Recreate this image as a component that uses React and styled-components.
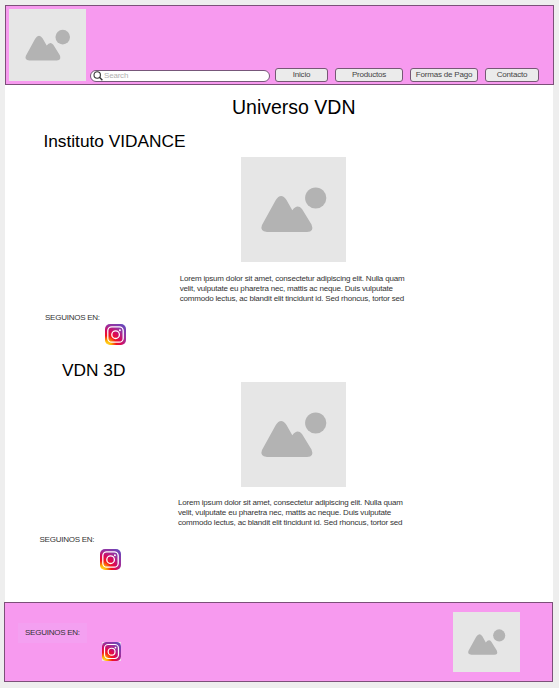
import React from "react";
import styled, { createGlobalStyle } from "styled-components";

const GlobalStyle = createGlobalStyle`
  * { box-sizing: border-box; }
  body {
    margin: 0;
    background: #eeeeee;
    font-family: "Liberation Sans", Arial, sans-serif;
    overflow: hidden;
  }
`;

const Page = styled.div`
  width: 559px;
  height: 688px;
  padding: 5px 5px 5px 4px;
  display: flex;
  flex-direction: column;
`;

const Header = styled.header`
  height: 80px;
  flex: none;
  margin-left: 1px;
  display: flex;
  align-items: flex-start;
  background: #f79aef;
  border: 1px solid #7c5079;
  padding: 3px;
`;

const Picture = styled.svg`
  display: block;
  flex: none;
  width: ${(p) => p.$w}px;
  height: ${(p) => p.$h}px;
  background: #e6e6e6;
  fill: #b3b3b3;
`;

const SearchBox = styled.label`
  width: 180px;
  height: 12px;
  margin: 61px 0 0 4px;
  padding-left: 2px;
  display: flex;
  align-items: center;
  gap: 1px;
  background: #fff;
  border: 1px solid #77577a;
  border-radius: 6px;
  flex: none;
`;

const Placeholder = styled.span`
  font-size: 8px;
  line-height: 10px;
  letter-spacing: -0.2px;
  color: #b0b0b0;
`;

const Nav = styled.nav`
  display: flex;
  gap: 7px;
  margin: 59px 0 0 5px;
`;

const NavButton = styled.button`
  width: ${(p) => p.$w}px;
  height: 14px;
  padding: 0 0 1px;
  border: 1px solid #775775;
  border-radius: 3px;
  background: #ebebeb;
  color: #444;
  font: 8px/10px "Liberation Sans", Arial, sans-serif;
  letter-spacing: -0.2px;
  white-space: nowrap;
`;

const Main = styled.main`
  width: 548px;
  height: 517px;
  flex: none;
  margin-left: 1px;
  background: #fff;
  display: flex;
  flex-direction: column;
`;

const Title = styled.h1`
  margin: 11px 0 13px 227px;
  font-size: 19.5px;
  line-height: 22px;
  font-weight: 400;
  color: #000;
  white-space: nowrap;
`;

const Section = styled.section`
  display: flex;
  flex-direction: column;
  align-items: flex-start;
  height: ${(p) => p.$h}px;
`;

const Heading = styled.h2`
  margin: 0 0 ${(p) => p.$bottom}px ${(p) => p.$left}px;
  font-size: 17.3px;
  line-height: 20px;
  font-weight: 400;
  color: #000;
  white-space: nowrap;
`;

const Figure = styled.div`
  margin-left: 236px;
`;

const Copy = styled.p`
  margin: ${(p) => p.$top}px 0 0 ${(p) => p.$left}px;
  font-size: 8px;
  line-height: 10px;
  letter-spacing: -0.19px;
  color: #333;
  white-space: pre;
`;

const Follow = styled.div`
  display: flex;
  flex-direction: column;
  align-items: flex-start;
  margin: ${(p) => p.$top}px 0 0 ${(p) => p.$left}px;
`;

const FollowLabel = styled.span`
  font-size: 8px;
  line-height: 10px;
  letter-spacing: -0.25px;
  color: #333;
  white-space: nowrap;
`;

const Logo = styled.svg`
  display: block;
  width: ${(p) => p.$size}px;
  height: ${(p) => p.$size}px;
  margin: ${(p) => p.$top}px 0 0 ${(p) => p.$left}px;
  background: ${(p) => p.$backing};
`;

const Footer = styled.footer`
  width: 549px;
  height: 80px;
  flex: none;
  display: flex;
  justify-content: space-between;
  align-items: flex-start;
  background: #f79aef;
  border: 1px solid #7c5079;
  padding: 9px 32px 0 13px;
`;

const FooterFollow = styled.div`
  display: flex;
  flex-direction: column;
  margin-top: 11px;
`;

const FooterLabel = styled(FollowLabel)`
  width: 69px;
  height: 20px;
  padding-left: 7px;
  background: #f4a0f1;
  line-height: 20px;
`;

function ImagePlaceholder({ w, h }) {
  return (
    <Picture $w={w} $h={h} viewBox="0 0 105 105">
      <path d="M21 68 L34.5 43.5 Q40 35 45.5 43 L51.3 53.3 Q56.3 46.5 61 52 L70.5 67.5 Q73.5 75 66 75 L26 75 Q18.5 74 21 68 Z" />
      <circle cx="74.7" cy="41" r="10.6" />
    </Picture>
  );
}

function Instagram({ id, size = 21, top = 0, left = 60, backing = "none" }) {
  return (
    <Logo $size={size} $top={top} $left={left} $backing={backing} viewBox="0 0 21 21">
      <defs>
        <radialGradient id={id} cx="0.1" cy="1" r="1.25">
          <stop offset="0" stopColor="#ffdb3d" />
          <stop offset="0.15" stopColor="#ffb800" />
          <stop offset="0.35" stopColor="#f3171c" />
          <stop offset="0.55" stopColor="#d50a60" />
          <stop offset="0.75" stopColor="#9833a0" />
          <stop offset="1" stopColor="#6349bd" />
        </radialGradient>
      </defs>
      <rect width="21" height="21" rx="5" fill={`url(#${id})`} />
      <g fill="none" stroke="#fff" strokeWidth="1.3">
        <rect x="2.8" y="2.8" width="15.4" height="15.4" rx="4" />
        <circle cx="10.6" cy="10.7" r="3.8" />
      </g>
      <circle cx="14.9" cy="6.2" r="0.95" fill="#fff" />
    </Logo>
  );
}

const LOREM = `Lorem ipsum dolor sit amet, consectetur adipiscing elit. Nulla quam
velit, vulputate eu pharetra nec, mattis ac neque. Duis vulputate
commodo lectus, ac blandit elit tincidunt id. Sed rhoncus, tortor sed`;

export default function App() {
  return (
    <>
      <GlobalStyle />
      <Page>
        <Header>
          <ImagePlaceholder w={77} h={72} />
          <SearchBox>
            <svg width="10" height="10" viewBox="0 0 10 10" fill="none" stroke="#333">
              <circle cx="4.2" cy="4" r="3.2" strokeWidth="1.1" />
              <path d="M6.5 6.3 L9.4 9.3" strokeWidth="1.4" />
            </svg>
            <Placeholder>Search</Placeholder>
          </SearchBox>
          <Nav>
            <NavButton $w={53}>Inicio</NavButton>
            <NavButton $w={68}>Productos</NavButton>
            <NavButton $w={68}>Formas de Pago</NavButton>
            <NavButton $w={54}>Contacto</NavButton>
          </Nav>
        </Header>
        <Main>
          <Title>Universo VDN</Title>
          <Section $h={229}>
            <Heading $left={38.4} $bottom={6}>Instituto VIDANCE</Heading>
            <Figure><ImagePlaceholder w={105} h={105} /></Figure>
            <Copy $top={12} $left={174.7}>{LOREM}</Copy>
            <Follow $top={9} $left={40}>
              <FollowLabel>SEGUINOS EN:</FollowLabel>
              <Instagram id="ig-dance" top={1} />
            </Follow>
          </Section>
          <Section $h={230}>
            <Heading $left={57} $bottom={2}>VDN 3D</Heading>
            <Figure><ImagePlaceholder w={105} h={105} /></Figure>
            <Copy $top={11} $left={173}>{LOREM}</Copy>
            <Follow $top={7} $left={34.5}>
              <FollowLabel>SEGUINOS EN:</FollowLabel>
              <Instagram id="ig-3d" top={4} />
            </Follow>
          </Section>
        </Main>
        <Footer>
          <FooterFollow>
            <FooterLabel>SEGUINOS EN:</FooterLabel>
            <Instagram id="ig-footer" size={19} top={-1} left={84} backing="#f3dcef" />
          </FooterFollow>
          <ImagePlaceholder w={67} h={60} />
        </Footer>
      </Page>
    </>
  );
}
